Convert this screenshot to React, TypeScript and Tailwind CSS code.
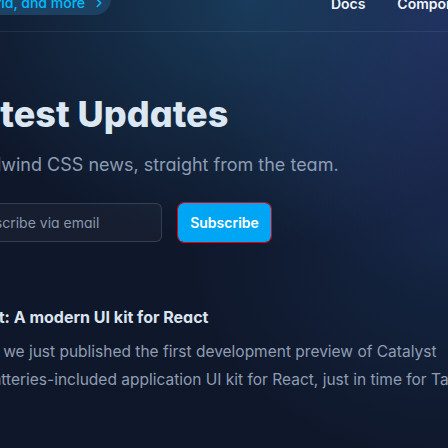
import { ChevronRight } from 'lucide-react'

export default function App() {
  return (
    <div className="relative w-[448px] h-[448px] overflow-hidden bg-[#0f172a] font-['Inter',sans-serif] [font-feature-settings:'cv11']">
      {/* background glow */}
      <div className="absolute inset-0 bg-[radial-gradient(ellipse_70%_55%_at_55%_0%,rgba(28,70,105,0.75),transparent),radial-gradient(ellipse_55%_60%_at_100%_5%,rgba(40,48,105,0.8),transparent),radial-gradient(ellipse_60%_50%_at_100%_55%,rgba(25,55,95,0.45),transparent)]" />

      <div className="relative">
        {/* header */}
        <div className="flex h-8 items-start justify-between border-b border-white/[0.07]">
          <div className="flex w-[111px] shrink-0 justify-end">
            <a className="-mt-[18px] flex h-[33px] shrink-0 items-start gap-[7px] rounded-br-2xl bg-[#1d4163] pt-[11px] pl-4 pr-[5px] text-sm font-medium text-sky-400 whitespace-nowrap">
              Tailwind CSS v3.4: Dynamic viewport units, :has() support, balanced headlines, subgrid, and more
              <ChevronRight size={14} strokeWidth={2.5} className="mt-[3px]" />
            </a>
          </div>
          <nav className="-mt-[6px] -mr-[36px] flex gap-8 text-sm font-semibold text-slate-100 whitespace-nowrap">
            <span>Docs</span>
            <span>Components</span>
          </nav>
        </div>

        {/* hero */}
        <div className="pt-[62px]">
          <h1 className="-ml-[43px] text-4xl leading-10 font-extrabold text-[#dbe7f2] whitespace-nowrap">
            Latest Updates
          </h1>
          <p className="-ml-[139px] mt-[17px] text-[18px] leading-7 text-[#8c9cb4] whitespace-nowrap">
            All the latest Tailwind CSS news, straight from the team.
          </p>
          <div className="-ml-[44px] mt-[24px] flex items-center gap-4">
            <div className="flex h-[39px] w-[206px] items-center rounded-md border border-slate-600/60 bg-white/[0.03] px-3 text-sm text-[#8a98ab] whitespace-nowrap">
              Subscribe via email
            </div>
            <button className="flex h-[39px] w-[93px] items-center justify-center rounded-md bg-sky-500 text-sm font-semibold text-white outline outline-1 outline-red-600">
              Subscribe
            </button>
          </div>
        </div>

        {/* post */}
        <div className="mt-[63px]">
          <h2 className="-ml-[156px] text-base leading-6 font-bold text-[#dbe4ee] whitespace-nowrap">
            Introducing Catalyst: A modern UI kit for React
          </h2>
          <div className="mt-[9px] text-[15.5px] leading-7 text-[#8f9db2] [font-feature-settings:normal] whitespace-nowrap">
            <p className="-ml-[46px]">Today we just published the first development preview of Catalyst</p>
            <p className="-ml-[17px]">batteries-included application UI kit for React, just in time for Tailwind</p>
          </div>
        </div>
      </div>
    </div>
  )
}
